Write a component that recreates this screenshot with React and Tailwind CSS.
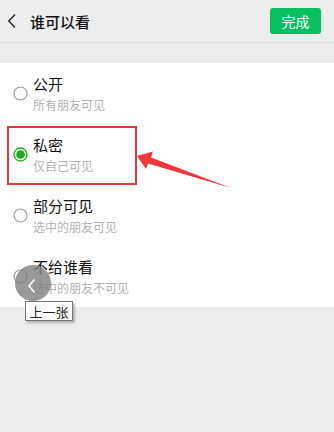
import React from 'react';

const options = [
  { title: '公开', sub: '所有朋友可见' },
  { title: '私密', sub: '仅自己可见', selected: true },
  { title: '部分可见', sub: '选中的朋友可见' },
  { title: '不给谁看', sub: '选中的朋友不可见' },
];

const Radio = ({ selected }) => (
  <svg width="15" height="15" viewBox="0 0 15 15" className="shrink-0">
    {selected ? (
      <>
        <circle cx="7.5" cy="7.5" r="6.5" fill="none" stroke="#1aad19" strokeWidth="1.3" />
        <circle cx="7.5" cy="7.5" r="4.3" fill="#1aad19" />
      </>
    ) : (
      <circle cx="7.5" cy="7.5" r="6.5" fill="none" stroke="#9a9a9a" strokeWidth="1.1" />
    )}
  </svg>
);

const App = () => {
  return (
    <div
      className="relative w-[334px] h-[432px] bg-[#ededed] overflow-hidden"
      style={{ fontFamily: '"Noto Sans CJK SC", "Noto Sans", sans-serif' }}
    >
      {/* Header */}
      <header className="h-[43px] flex items-center justify-between pl-[7px] pr-[13px] border-b border-[#dcdcdc]">
        <div className="flex items-center">
          <svg width="10" height="16" viewBox="0 0 10 16">
            <path d="M8 1.5 L1.8 8 L8 14.5" fill="none" stroke="#222" strokeWidth="1.4" />
          </svg>
          <h1 className="ml-[13px] text-[15px] font-medium text-[#111] leading-none">谁可以看</h1>
        </div>
        <button className="w-[51px] h-[26px] rounded-[3px] bg-[#07c160] text-white text-[14px] leading-none">
          完成
        </button>
      </header>

      <div className="h-[20px]" />

      {/* Options */}
      <div className="bg-white">
        {options.map((o) => (
          <div key={o.title} className="h-[61px] flex items-center pl-[13px]">
            <Radio selected={o.selected} />
            <div className="ml-[5px]">
              <div className="text-[15px] leading-[20px] text-[#111]">{o.title}</div>
              <div className="mt-[3px] text-[12px] leading-[16px] text-[#b2b2b2]">{o.sub}</div>
            </div>
          </div>
        ))}
      </div>

      {/* Annotation box */}
      <div className="absolute left-[7px] top-[126px] w-[130px] h-[59px] border-[2.5px] border-[#e8383d]" />

      {/* Annotation arrow */}
      <svg className="absolute left-0 top-0" width="334" height="432" viewBox="0 0 334 432">
        <polygon
          points="137,156 153,151.5 151,157.5 231,188 148,163.5 146,169"
          fill="#f0373c"
        />
      </svg>

      {/* Previous-image overlay */}
      <div className="absolute left-[15px] top-[265px] w-[36px] h-[36px] rounded-full bg-[#808080]/80 flex items-center justify-center">
        <svg width="10" height="16" viewBox="0 0 10 16" className="mt-[5px] -ml-[2px]">
          <path d="M7.5 1.5 L2 8 L7.5 14.5" fill="none" stroke="#fff" strokeWidth="1.6" />
        </svg>
      </div>
      <div className="absolute left-[25px] top-[301px] w-[48px] h-[20px] bg-white border border-[#767676] shadow-[2px_2px_2px_rgba(0,0,0,0.25)] flex items-center justify-center text-[13px] text-[#222] leading-none">
        上一张
      </div>
    </div>
  );
};

export default App;
